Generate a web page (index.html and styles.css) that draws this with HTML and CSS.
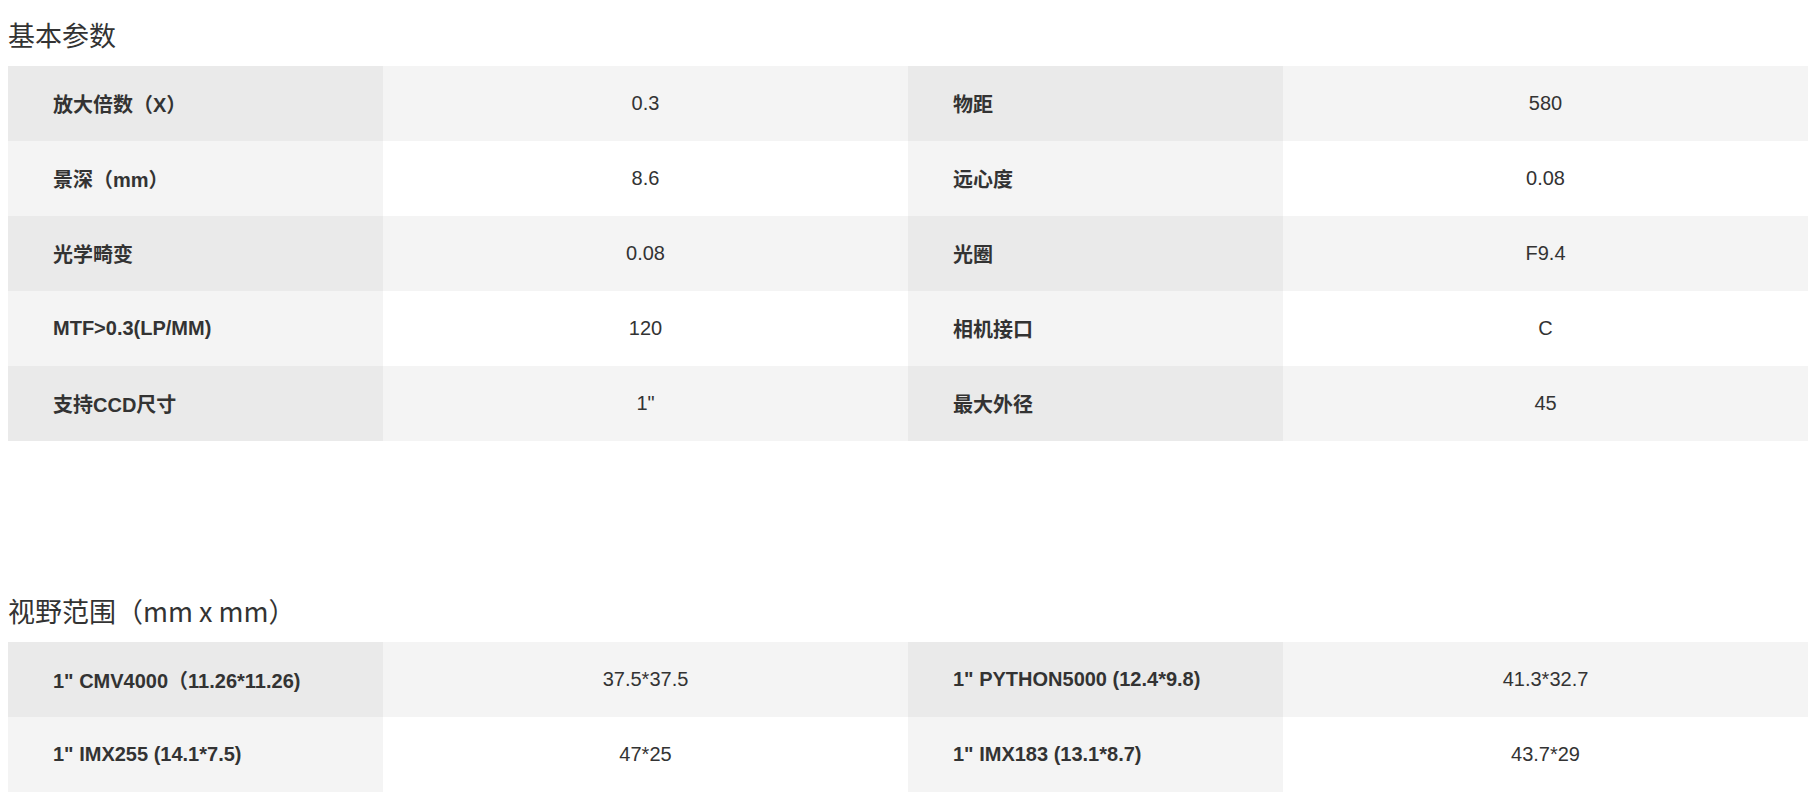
FILE: index.html
```html
<!DOCTYPE html>
<html lang="zh-CN">
<head>
<meta charset="utf-8">
<title>参数</title>
<link rel="stylesheet" href="styles.css">
</head>
<body>
<section class="section">
  <h2 class="title">基本参数</h2>
  <div class="spec">
    <div class="row"><div class="k">放大倍数（X）</div><div class="v">0.3</div><div class="k">物距</div><div class="v">580</div></div>
    <div class="row"><div class="k">景深（mm）</div><div class="v">8.6</div><div class="k">远心度</div><div class="v">0.08</div></div>
    <div class="row"><div class="k">光学畸变</div><div class="v">0.08</div><div class="k">光圈</div><div class="v">F9.4</div></div>
    <div class="row"><div class="k">MTF&gt;0.3(LP/MM)</div><div class="v">120</div><div class="k">相机接口</div><div class="v">C</div></div>
    <div class="row"><div class="k">支持CCD尺寸</div><div class="v">1"</div><div class="k">最大外径</div><div class="v">45</div></div>
  </div>
</section>
<section class="section section-fov">
  <h2 class="title">视野范围（mm x mm）</h2>
  <div class="spec">
    <div class="row"><div class="k">1" CMV4000（11.26*11.26)</div><div class="v">37.5*37.5</div><div class="k">1" PYTHON5000 (12.4*9.8)</div><div class="v">41.3*32.7</div></div>
    <div class="row"><div class="k">1" IMX255 (14.1*7.5)</div><div class="v">47*25</div><div class="k">1" IMX183 (13.1*8.7)</div><div class="v">43.7*29</div></div>
  </div>
</section>
</body>
</html>
```
FILE: styles.css
```css
html, body {
  margin: 0;
  padding: 0;
  background: #fff;
}
body {
  padding: 8px 4px 0 8px;
  color: #333;
  font-family: "Liberation Sans", "Noto Sans CJK SC", Arial, sans-serif;
}
.section-fov {
  margin-top: 143px;
}
.title {
  margin: 0;
  padding: 9px 0 13px;
  font-family: "Noto Sans CJK SC", "Noto Sans", sans-serif;
  font-size: 27px;
  line-height: 36px;
  font-weight: normal;
  color: #333;
}
.spec {
  display: flex;
  flex-direction: column;
}
.row {
  display: grid;
  grid-template-columns: 375px 525px 375px 1fr;
  height: 75px;
}
.k {
  display: flex;
  align-items: center;
  padding-left: 45px;
  font-size: 20px;
  font-weight: bold;
  color: #333;
  background: #eaeaea;
}
.v {
  display: flex;
  align-items: center;
  justify-content: center;
  font-size: 20px;
  color: #333;
  background: #f4f4f4;
}
.row:nth-child(even) .k {
  background: #f4f4f4;
}
.row:nth-child(even) .v {
  background: #fff;
}
```
